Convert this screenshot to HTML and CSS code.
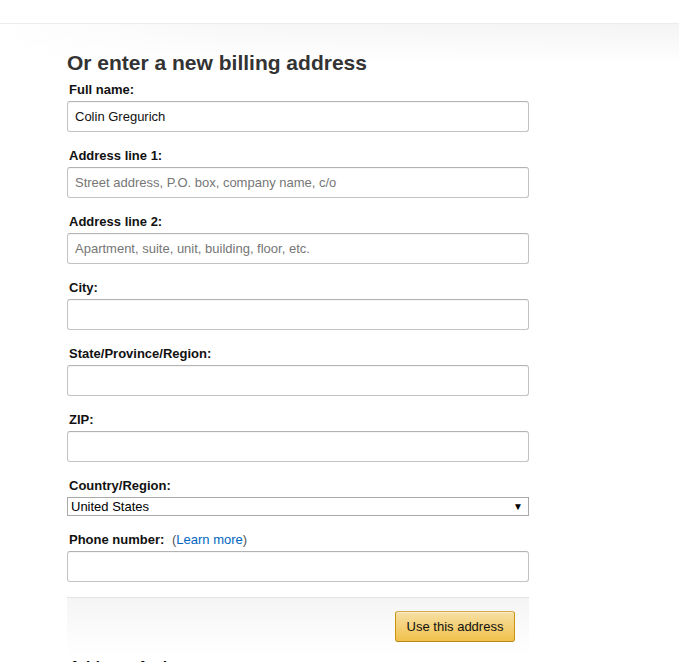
FILE: index.html
```html
<!DOCTYPE html>
<html>
<head>
<meta charset="utf-8">
<link rel="stylesheet" href="styles.css">
</head>
<body>
<div class="page">
  <div class="content">
    <h2 class="title">Or enter a new billing address</h2>
    <div class="field">
      <label class="label">Full name:</label>
      <div class="input">Colin Gregurich</div>
    </div>
    <div class="field">
      <label class="label">Address line 1:</label>
      <div class="input placeholder">Street address, P.O. box, company name, c/o</div>
    </div>
    <div class="field">
      <label class="label">Address line 2:</label>
      <div class="input placeholder">Apartment, suite, unit, building, floor, etc.</div>
    </div>
    <div class="field">
      <label class="label">City:</label>
      <div class="input"></div>
    </div>
    <div class="field">
      <label class="label">State/Province/Region:</label>
      <div class="input"></div>
    </div>
    <div class="field">
      <label class="label">ZIP:</label>
      <div class="input"></div>
    </div>
    <div class="field">
      <label class="label">Country/Region:</label>
      <div class="select"><span>United States</span><span class="arrow">&#9660;</span></div>
    </div>
    <div class="field">
      <label class="label">Phone number: <span class="note">(<a class="link">Learn more</a>)</span></label>
      <div class="input"></div>
    </div>
    <div class="footer">
      <button class="btn">Use this address</button>
    </div>
    <h3 class="next">Address Actions</h3>
  </div>
</div>
</body>
</html>
```
FILE: styles.css
```css
html, body {
  margin: 0;
  padding: 0;
  background: #fff;
}
body {
  font-family: Arial, "Liberation Sans", sans-serif;
  color: #111;
  overflow: hidden;
  height: 662px;
}
.page {
  margin-top: 23px;
  border-top: 1px solid #ececec;
  background:
    linear-gradient(to bottom, rgba(255,255,255,0) 0, #fff 40px),
    linear-gradient(to right, #fff 0, #f7f7f7 35%, #f4f4f4 100%);
  background-repeat: no-repeat;
  background-size: 100% 40px;
  padding-top: 25px;
}
.content {
  margin-left: 67px;
  width: 462px;
}
.title {
  font-size: 21px;
  font-weight: 700;
  line-height: 27px;
  color: #333;
  margin: 0 0 4px 0;
  letter-spacing: 0;
}
.field {
  display: flex;
  flex-direction: column;
  margin-bottom: 14px;
}
.label {
  font-size: 13px;
  font-weight: 700;
  line-height: 19px;
  padding-left: 2px;
  margin-bottom: 2px;
  color: #111;
}
.note {
  font-weight: 400;
  color: #555;
  margin-left: 4px;
}
.link {
  color: #0066c0;
}
.input {
  box-sizing: border-box;
  height: 31px;
  border: 1px solid #c3c3c3;
  border-top-color: #b3b3b3;
  border-radius: 3px;
  box-shadow: inset 0 1px 0 rgba(0,0,0,0.04);
  padding: 0 7px;
  font-size: 13px;
  line-height: 29px;
  color: #111;
  background: #fff;
}
.placeholder {
  color: #767676;
}
.select {
  box-sizing: border-box;
  height: 19px;
  border: 1px solid #a9a9a9;
  display: flex;
  justify-content: space-between;
  align-items: center;
  padding: 0 5px 0 3px;
  font-size: 13px;
  color: #000;
  background: #fff;
}
.arrow {
  font-size: 10px;
  line-height: 10px;
  color: #000;
}
.footer {
  margin-top: 15px;
  border-top: 1px solid #e3e3e3;
  background: linear-gradient(to bottom, #f5f5f5 0, #fafafa 50%, #fff 100%);
  display: flex;
  justify-content: flex-end;
  padding: 13px 14px 14px 0;
}
.btn {
  width: 120px;
  height: 31px;
  border: 1px solid #c89411;
  border-top-color: #d4a84a;
  border-bottom-color: #b7861a;
  border-radius: 3px;
  background: linear-gradient(to bottom, #f7dfa5, #f0c14b);
  font-family: Arial, "Liberation Sans", sans-serif;
  font-size: 13px;
  color: #111;
  padding: 0;
  box-shadow: inset 0 1px 0 rgba(255,255,255,0.4);
}
.next {
  margin: 2px 0 0 2px;
  font-size: 16px;
  font-weight: 700;
  line-height: 20px;
  color: #111;
}
```
